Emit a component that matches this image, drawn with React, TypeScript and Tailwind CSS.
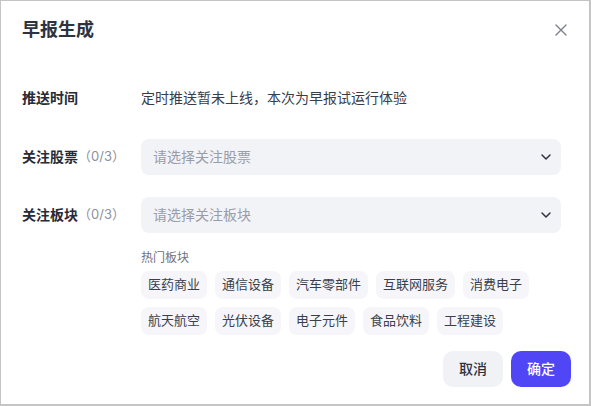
import { ChevronDown } from "lucide-react";

const hotSectors = [
  ["医药商业", "通信设备", "汽车零部件", "互联网服务", "消费电子"],
  ["航天航空", "光伏设备", "电子元件", "食品饮料", "工程建设"],
];

function SelectBox({ placeholder }: { placeholder: string }) {
  return (
    <div className="flex h-9 flex-1 items-center justify-between rounded-lg bg-[#f2f3f7] pl-3 pr-[7px]">
      <span className="text-sm text-[#9a9ca6]">{placeholder}</span>
      <ChevronDown size={16} strokeWidth={2.3} className="text-[#2f3542]" />
    </div>
  );
}

function FieldLabel({ text, count }: { text: string; count?: string }) {
  return (
    <div className="flex w-[119px] shrink-0 items-center">
      <span className="text-sm font-semibold text-[#262b36]">{text}</span>
      {count && <span className="text-[13px] text-[#8e919b]">{count}</span>}
    </div>
  );
}

export default function App() {
  return (
    <div
      className="flex h-[406px] w-[591px] flex-col border-l border-t border-r-2 border-b-2 border-[#c4c4c4] bg-white"
      style={{ fontFamily: 'Inter, "Noto Sans CJK SC", sans-serif' }}
    >
      <header className="flex items-center justify-between pl-[21px] pr-5 pt-[15px]">
        <h1 className="text-lg font-semibold leading-7 text-[#2d3340]">早报生成</h1>
        <button className="flex h-4 w-4 items-center justify-center text-[#7b7f8a]">
          <svg width="12" height="12" viewBox="0 0 12 12" fill="none" stroke="currentColor" strokeWidth="1.4" strokeLinecap="round">
            <path d="M1 1l10 10M11 1L1 11" />
          </svg>
        </button>
      </header>

      <div className="flex flex-col pl-[21px] pr-[28px]">
        <div className="mt-[44px] flex h-5 items-center">
          <FieldLabel text="推送时间" />
          <span className="text-sm text-[#383d49]">定时推送暂未上线，本次为早报试运行体验</span>
        </div>

        <div className="mt-[31px] flex items-center">
          <FieldLabel text="关注股票" count="（0/3）" />
          <SelectBox placeholder="请选择关注股票" />
        </div>

        <div className="mt-[22px] flex items-center">
          <FieldLabel text="关注板块" count="（0/3）" />
          <SelectBox placeholder="请选择关注板块" />
        </div>

        <div className="ml-[119px] mt-[17px] flex flex-col">
          <div className="text-xs leading-4 text-[#6f7380]">热门板块</div>
          <div className="mt-[5px] flex flex-col gap-2">
            {hotSectors.map((row, i) => (
              <div key={i} className="flex gap-2">
                {row.map((s) => (
                  <span
                    key={s}
                    className="flex h-7 items-center rounded-lg bg-[#f6f6fa] px-[7px] text-[13px] text-[#3a3f4b]"
                  >
                    {s}
                  </span>
                ))}
              </div>
            ))}
          </div>
        </div>
      </div>

      <footer className="mt-4 flex justify-end gap-2 pr-[18px]">
        <button className="h-9 w-[60px] rounded-[10px] bg-[#f1f2f6] text-sm font-medium text-[#2d3340]">取消</button>
        <button className="h-9 w-[60px] rounded-[10px] bg-[#5046f6] text-sm font-medium text-white">确定</button>
      </footer>
    </div>
  );
}
